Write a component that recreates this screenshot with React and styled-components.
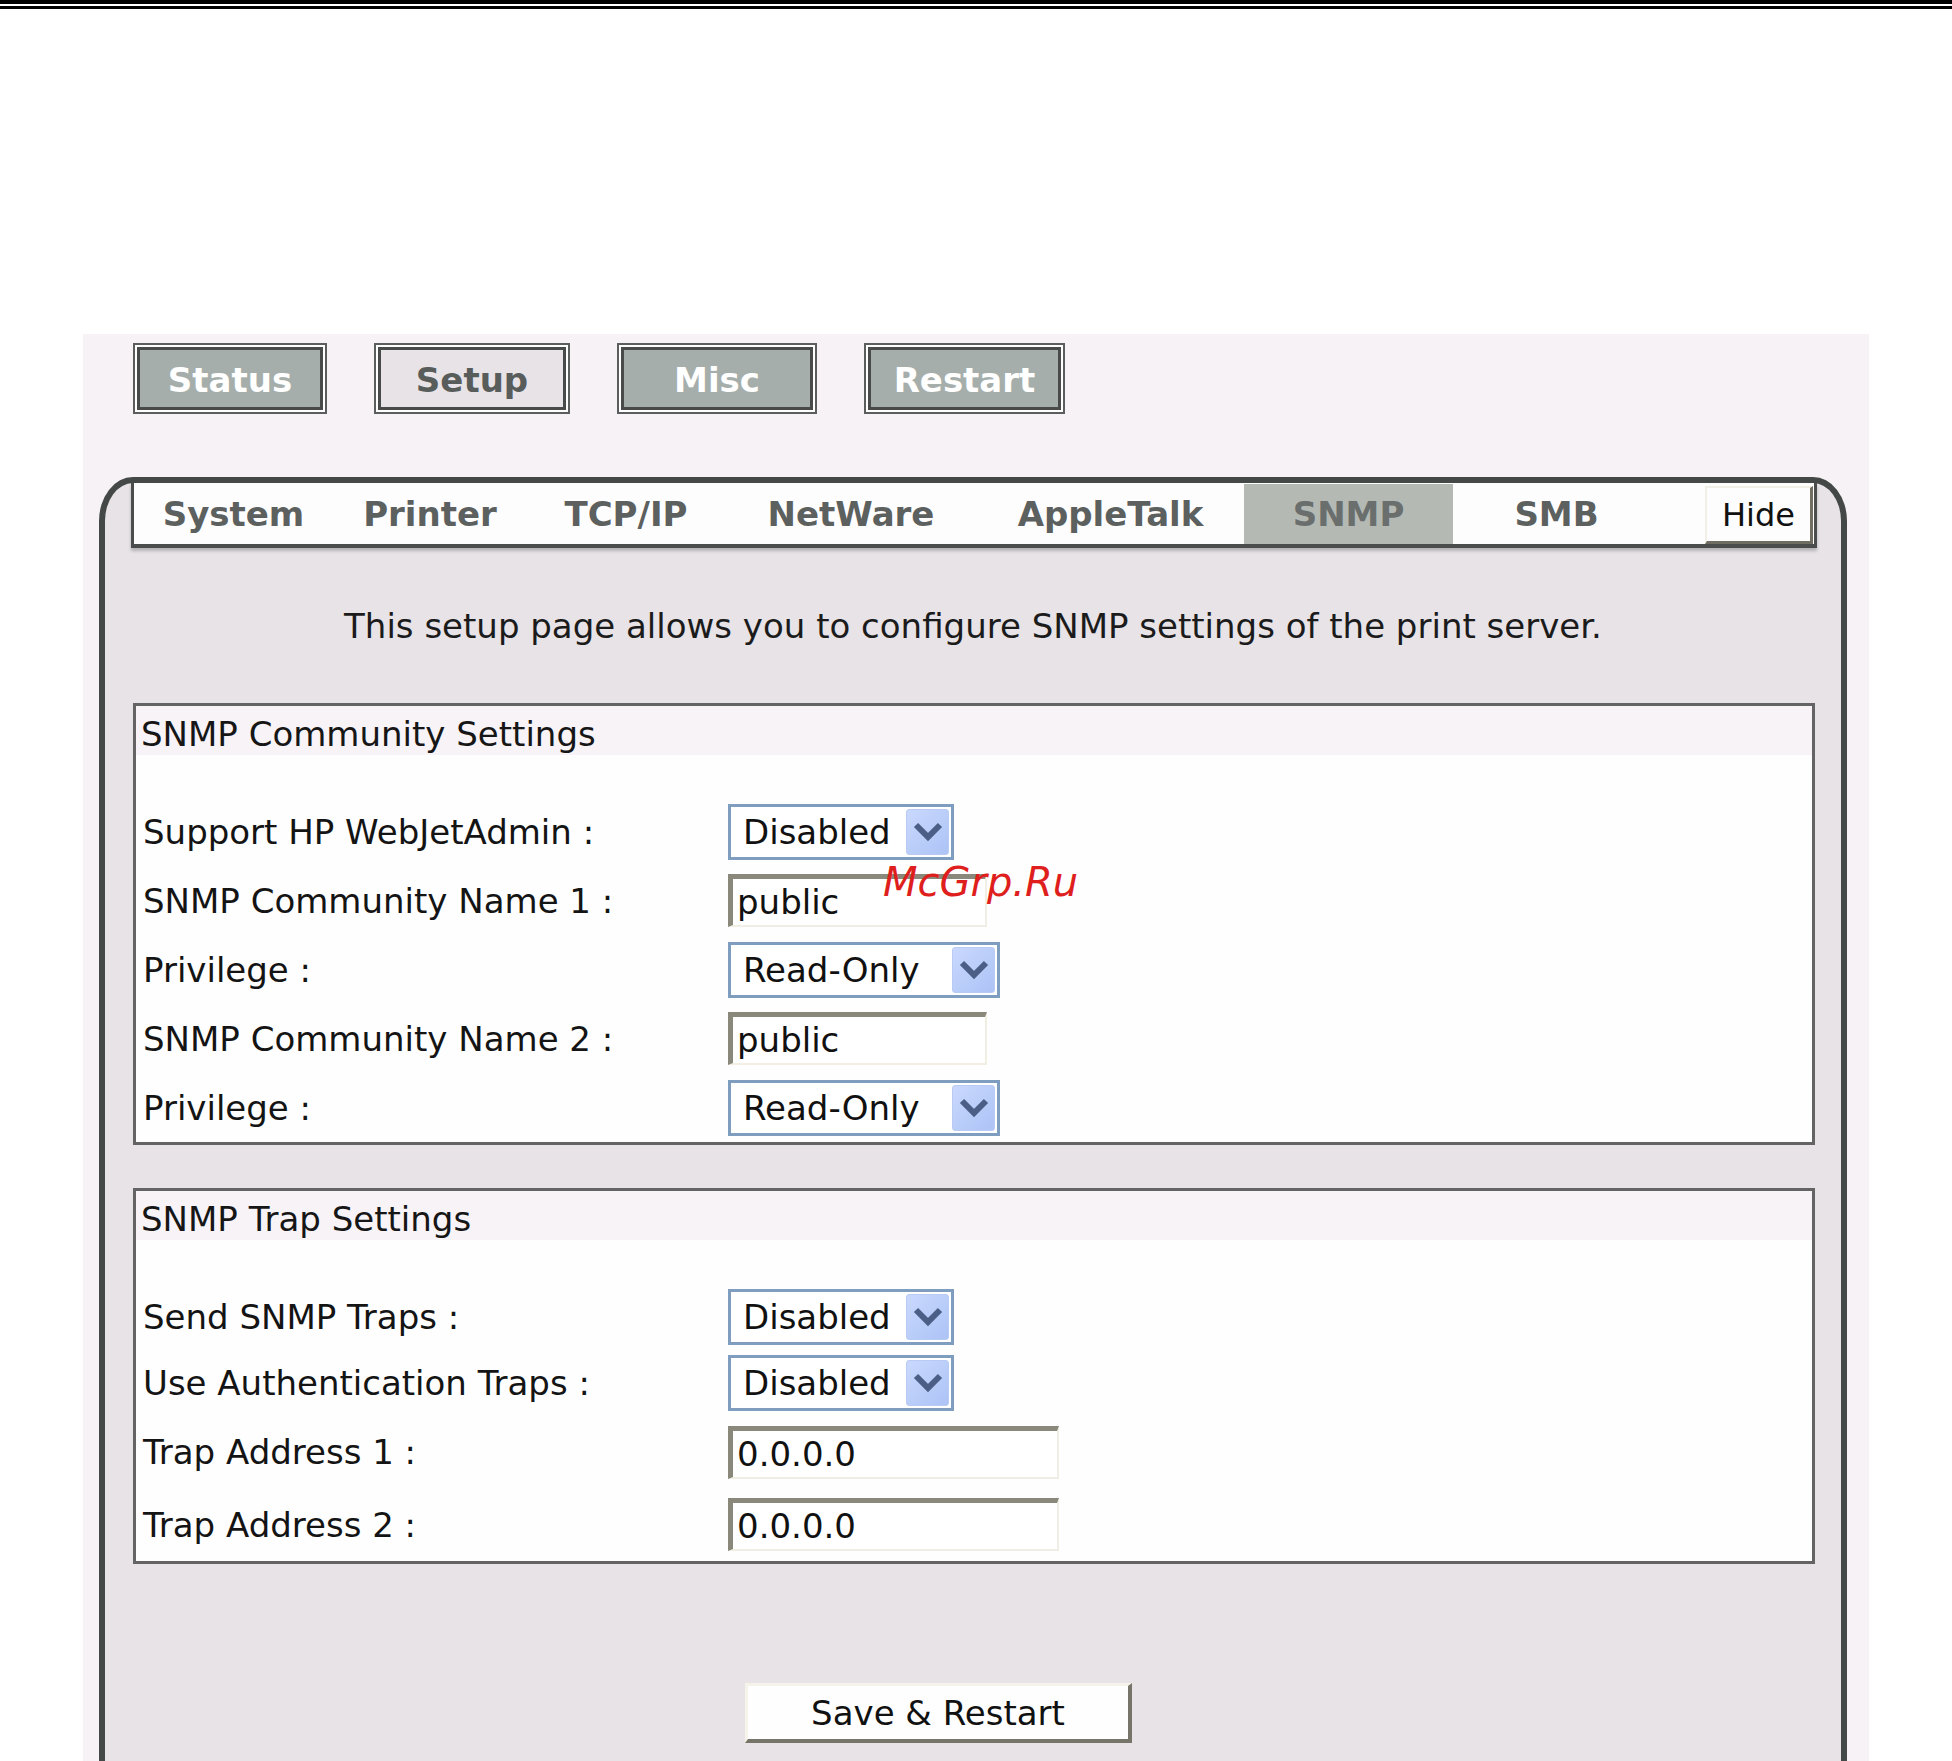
import React from 'react';
import styled, { createGlobalStyle } from 'styled-components';

const GlobalStyle = createGlobalStyle`
  html, body {
    margin: 0;
    padding: 0;
    overflow: hidden;
    background: #ffffff;
  }
  body {
    font-family: "DejaVu Sans", Verdana, sans-serif;
    font-size: 34px;
    color: #111;
  }
  * {
    box-sizing: border-box;
  }
`;

const Page = styled.div`
  position: relative;
  width: 1952px;
`;

const TopRule = styled.div`
  height: 9px;
  border-top: 4px solid #000;
  border-bottom: 3px solid #000;
  background: #fff;
`;

const Panel = styled.div`
  margin: 325px 83px 0 83px;
  padding: 9px 22px 0 16px;
  background: #f6f2f6;
`;

const MenuBar = styled.div`
  display: flex;
  gap: 47px;
  padding-left: 34px;
`;

const MenuButton = styled.div`
  width: ${(p) => p.$w}px;
  height: 71px;
  border: 2px solid #5b5e5d;
  padding: 2px;
  background: #fff;
`;

const MenuFace = styled.div`
  height: 100%;
  border: 3px solid #484b4a;
  background: ${(p) => (p.$current ? '#e7e3e7' : '#a6aeab')};
  color: ${(p) => (p.$current ? '#585c5a' : '#ffffff')};
  font-weight: bold;
  display: flex;
  align-items: center;
  justify-content: center;
  padding-top: 3px;
`;

const Frame = styled.div`
  margin-top: 63px;
  border: 6px solid #444846;
  border-bottom: none;
  border-top-left-radius: 34px 44px;
  border-top-right-radius: 34px 44px;
  background: #e7e3e7;
  padding-bottom: 120px;
`;

const TabBar = styled.div`
  display: flex;
  align-items: flex-end;
  height: 65px;
  margin: 0 24px 0 26px;
  background: #fdfdfd;
  border-left: 3px solid #4a4d4c;
  border-right: 3px solid #4a4d4c;
  border-bottom: 4px solid #4a4d4c;
  box-shadow: 0 3px 3px rgba(0, 0, 0, 0.22);
  padding-right: 1px;
`;

const Tab = styled.div`
  width: ${(p) => p.$w}px;
  height: 60px;
  display: flex;
  align-items: center;
  justify-content: center;
  font-weight: bold;
  color: ${(p) => (p.$active ? '#6a6e6c' : '#5c605e')};
  background: ${(p) => (p.$active ? '#b4b9b4' : 'transparent')};
`;

const TabFill = styled.div`
  flex: 1;
`;

const HideButton = styled.div`
  width: 108px;
  height: 58px;
  display: flex;
  align-items: center;
  justify-content: center;
  font-size: 32px;
  color: #111;
  background: #fdfdfd;
  border-top: 2px solid #f2f0e6;
  border-left: 2px solid #f2f0e6;
  border-right: 3px solid #6f6d62;
  border-bottom: 3px solid #6f6d62;
`;

const Intro = styled.p`
  margin: 58px 0 0 0;
  line-height: 40px;
  text-align: center;
  color: #1b1b1b;
`;

const Section = styled.div`
  margin: ${(p) => p.$top}px 26px 0 28px;
  border: 3px solid #646464;
`;

const SectionTitle = styled.div`
  height: 49px;
  line-height: 49px;
  padding: 4px 0 0 5px;
  background: #f7f3f7;
  color: #161616;
`;

const SectionBody = styled.div`
  background: #fefefe;
  padding-top: ${(p) => p.$pad || 42}px;
`;

const Row = styled.div`
  display: grid;
  grid-template-columns: 592px 1fr;
  align-items: center;
  height: ${(p) => p.$h || 69}px;
`;

const Label = styled.div`
  padding-left: 7px;
  color: #141414;
  white-space: nowrap;
`;

const SelectBox = styled.div`
  width: ${(p) => p.$w}px;
  height: 56px;
  border: 3px solid #7f9dbf;
  background: #fff;
  display: flex;
  align-items: center;
  justify-content: space-between;
  padding: 0 2px 0 12px;
  color: #111;
`;

const SelectArrow = styled.div`
  width: 43px;
  height: 46px;
  border-radius: 3px;
  border: 1px solid #b9cbf2;
  background: linear-gradient(135deg, #cad8fd 0%, #b9cdf9 55%, #adc3f6 100%);
  display: flex;
  align-items: center;
  justify-content: center;
`;

const TextField = styled.input`
  width: ${(p) => p.$w}px;
  height: 53px;
  margin: 0;
  padding: 0 0 0 4px;
  font: inherit;
  color: #111;
  background: #fff;
  border-style: solid;
  border-width: 5px 2px 2px 5px;
  border-color: #8a887b #f3eee4 #f3eee4 #8a887b;
  outline: none;
`;

const SaveButton = styled.div`
  margin: 119px 0 0 640px;
  width: 387px;
  height: 60px;
  display: flex;
  align-items: center;
  justify-content: center;
  background: #fefefe;
  border-top: 3px solid #f5f3ea;
  border-left: 3px solid #f5f3ea;
  border-right: 4px solid #77756a;
  border-bottom: 4px solid #77756a;
  color: #111;
`;

const Watermark = styled.div`
  position: absolute;
  left: 883px;
  top: 862px;
  font-size: 40px;
  line-height: 40px;
  font-style: oblique;
  color: #de1f1d;
  white-space: nowrap;
`;

const Chevron = () => (
  <svg width="30" height="22" viewBox="0 0 30 22">
    <path d="M3 4 L15 16 L27 4" fill="none" stroke="#4b5f86" strokeWidth="6" strokeLinejoin="miter" />
  </svg>
);

const Select = ({ value, w }) => (
  <SelectBox $w={w}>
    <span>{value}</span>
    <SelectArrow>
      <Chevron />
    </SelectArrow>
  </SelectBox>
);

const menu = [
  { label: 'Status', w: 194 },
  { label: 'Setup', w: 196, current: true },
  { label: 'Misc', w: 200 },
  { label: 'Restart', w: 201 },
];

const tabs = [
  { label: 'System', w: 199 },
  { label: 'Printer', w: 194 },
  { label: 'TCP/IP', w: 198 },
  { label: 'NetWare', w: 252 },
  { label: 'AppleTalk', w: 267 },
  { label: 'SNMP', w: 209, active: true },
  { label: 'SMB', w: 207 },
];

const App = () => {
  return (
    <Page>
      <GlobalStyle />
      <TopRule />
      <Panel>
        <MenuBar>
          {menu.map((m) => (
            <MenuButton key={m.label} $w={m.w}>
              <MenuFace $current={m.current}>{m.label}</MenuFace>
            </MenuButton>
          ))}
        </MenuBar>

        <Frame>
          <TabBar>
            {tabs.map((t) => (
              <Tab key={t.label} $w={t.w} $active={t.active}>
                {t.label}
              </Tab>
            ))}
            <TabFill />
            <HideButton>Hide</HideButton>
          </TabBar>

          <Intro>This setup page allows you to configure SNMP settings of the print server.</Intro>

          <Section $top={57}>
            <SectionTitle>SNMP Community Settings</SectionTitle>
            <SectionBody>
              <Row>
                <Label>Support HP WebJetAdmin :</Label>
                <Select value="Disabled" w={226} />
              </Row>
              <Row>
                <Label>SNMP Community Name 1 :</Label>
                <TextField $w={259} defaultValue="public" readOnly />
              </Row>
              <Row>
                <Label>Privilege :</Label>
                <Select value="Read-Only" w={272} />
              </Row>
              <Row>
                <Label>SNMP Community Name 2 :</Label>
                <TextField $w={259} defaultValue="public" readOnly />
              </Row>
              <Row>
                <Label>Privilege :</Label>
                <Select value="Read-Only" w={272} />
              </Row>
            </SectionBody>
          </Section>

          <Section $top={43}>
            <SectionTitle>SNMP Trap Settings</SectionTitle>
            <SectionBody $pad={44}>
              <Row $h={66}>
                <Label>Send SNMP Traps :</Label>
                <Select value="Disabled" w={226} />
              </Row>
              <Row $h={66}>
                <Label>Use Authentication Traps :</Label>
                <Select value="Disabled" w={226} />
              </Row>
              <Row $h={72}>
                <Label>Trap Address 1 :</Label>
                <TextField $w={331} defaultValue="0.0.0.0" readOnly />
              </Row>
              <Row $h={73}>
                <Label>Trap Address 2 :</Label>
                <TextField $w={331} defaultValue="0.0.0.0" readOnly />
              </Row>
            </SectionBody>
          </Section>

          <SaveButton>Save &amp; Restart</SaveButton>
        </Frame>
      </Panel>
      <Watermark>McGrp.Ru</Watermark>
    </Page>
  );
};

export default App;
